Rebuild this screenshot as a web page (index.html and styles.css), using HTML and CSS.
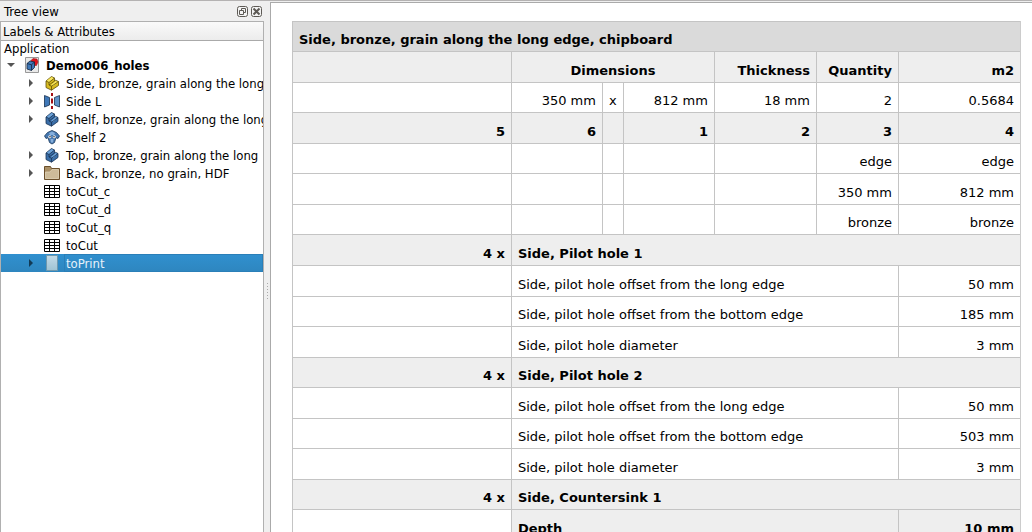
FILE: index.html
```html
<!DOCTYPE html>
<html lang="en">
<head>
<meta charset="utf-8">
<title>Demo006_holes</title>
<link rel="stylesheet" href="styles.css">
</head>
<body>
<svg class="defs" aria-hidden="true">
  <defs>
    <symbol id="sheet" viewBox="0 0 16 16">
      <path fill="#fff" d="M0 2h16v13H0z"/>
      <path fill="none" stroke="#000" d="M.5 2.500h15v12H.5zM0 5.500h16M0 8.500h16M0 11.500h16M5.500 2v13M10.500 2v13"/>
    </symbol>
    <symbol id="solid" viewBox="0 0 16 16">
      <path fill="#3a6ea8" stroke="#1b3454" stroke-width=".8" stroke-linejoin="round" d="M2 6 7.500 1.500 10.500 3v3l1-.7 2.500 1.200v4L7.500 15.200 2 12.500z"/>
      <path fill="#6ea3d8" d="M2.500 6 7.500 2l2.500 1.200L5 7.300zM7 10l4.500-4 2 1-4.300 4z"/>
      <path fill="none" stroke="#1b3454" stroke-width=".8" d="M2 6l3 1.500V10l2.500 1.300v3.900M7.500 11.300 14 6.500M5 7.500 10.500 3M5 10l5.500-4"/>
    </symbol>
    <symbol id="gold" viewBox="0 0 16 16">
      <path fill="#d8bb20" stroke="#5e4f0a" stroke-width=".8" stroke-linejoin="round" d="M2 6 7.500 1.500 10.500 3v3l1-.7 3 1.200v4L7.500 15.200 2 12.500z"/>
      <path fill="#f7e660" d="M2.500 6 7.500 2l2.500 1.200L5 7.300zM7 10l4.500-4 2.300 1-4.600 4z"/>
      <path fill="none" stroke="#5e4f0a" stroke-width=".8" d="M2 6l3 1.500V10l2.500 1.300v3.900M7.500 11.300 14.500 6.500M5 7.500 10.500 3M5 10l5.500-4"/>
    </symbol>
  </defs>
</svg>
<div class="app">
  <aside class="dock">
    <header class="dock-title">
      <h1 class="dock-name">Tree view</h1>
      <button class="dock-btn" type="button" aria-label="Float panel"><svg viewBox="0 0 11 11"><rect x=".5" y=".5" width="10" height="10" rx="2" fill="#f4f4f4" stroke="#5d5a55"/><path fill="none" stroke="#5d5a55" d="M4.500 4.500v-2h4v4h-2M2.500 4.500h4v4h-4z"/></svg></button>
      <button class="dock-btn" type="button" aria-label="Close panel"><svg viewBox="0 0 11 11"><rect x=".5" y=".5" width="10" height="10" rx="2" fill="#f4f4f4" stroke="#5d5a55"/><path stroke="#5d5a55" stroke-width="2" d="m2.500 2.500 6 6m0-6-6 6"/></svg></button>
    </header>
    <div class="tree">
      <div class="tree-head">Labels &amp; Attributes</div>
      <ul class="items">
        <li class="row root">Application</li>
        <li class="row doc">
          <button class="toggle open" type="button" aria-label="Collapse"></button>
          <svg class="icon" viewBox="0 0 16 16"><path fill="#e9e9e9" stroke="#999" d="M1.500.5h13v15h-13z"/><path fill="#e0141c" stroke="#8c0a10" stroke-width=".5" d="M7 3.500 9 1.500l4 .5 1 3-1.500 3.500h-3z"/><path fill="#3f78b8" stroke="#12243f" stroke-width=".8" stroke-linejoin="round" d="m3 6.500 3-2.500 4.500 1v5.500L7.500 13.500 3 12z"/><path fill="none" stroke="#12243f" stroke-width=".8" d="m3 6.500 4.500 1.300 3-2.800M7.500 7.800v5.700"/></svg>
          <span class="label">Demo006_holes</span>
        </li>
        <li class="row"><button class="toggle" type="button" aria-label="Expand"></button><svg class="icon"><use href="#gold"/></svg><span class="label">Side, bronze, grain along the long</span></li>
        <li class="row"><button class="toggle" type="button" aria-label="Expand"></button><svg class="icon" viewBox="0 0 16 16"><path fill="#3f78b8" stroke="#16304f" stroke-width=".8" d="M.5 2.500 5.500 4.500v7.500l-5 2z"/><path fill="#5f92c8" stroke="#16304f" stroke-width=".8" d="M15.500 2.500 10.500 4.500v7.500l5 2z"/><path stroke="#a40f14" stroke-width="2" d="M8 0v3M8 5.500v5M8 13v3"/></svg><span class="label">Side L</span></li>
        <li class="row"><button class="toggle" type="button" aria-label="Expand"></button><svg class="icon"><use href="#solid"/></svg><span class="label">Shelf, bronze, grain along the long</span></li>
        <li class="row"><span class="toggle none"></span><svg class="icon" viewBox="0 0 16 16"><path fill="#4678b0" stroke="#1c3a5e" stroke-width=".8" d="M.5 7 3.500 3.500 8 1.500l4.500 2L15.500 7 14 9.500l-2-.8-1.500 4.800L8 15l-2.500-1.500L4 8.700l-2 .8z"/><path fill="#86afdb" d="M5 4 8 2.500 11 4l-1 2H6zM6.500 10h3l-.5 3.500H7z"/><circle cx="5.800" cy="7.800" r="1.500" fill="#fff"/><circle cx="10.200" cy="7.800" r="1.500" fill="#fff"/><circle cx="6" cy="7.800" r=".7"/><circle cx="10" cy="7.800" r=".7"/></svg><span class="label">Shelf 2</span></li>
        <li class="row"><button class="toggle" type="button" aria-label="Expand"></button><svg class="icon"><use href="#solid"/></svg><span class="label">Top, bronze, grain along the long</span></li>
        <li class="row"><button class="toggle" type="button" aria-label="Expand"></button><svg class="icon" viewBox="0 0 16 16"><path fill="#a98f66" stroke="#6b4f2a" stroke-linejoin="round" d="M.5 14.500v-13h6l1 2h8v11z"/><path fill="#cdbb99" stroke="#e4d8bf" stroke-width=".7" d="M1.500 13.500V7h4.500l2-2.500h6.500v9z"/></svg><span class="label">Back, bronze, no grain, HDF</span></li>
        <li class="row"><span class="toggle none"></span><svg class="icon"><use href="#sheet"/></svg><span class="label">toCut_c</span></li>
        <li class="row"><span class="toggle none"></span><svg class="icon"><use href="#sheet"/></svg><span class="label">toCut_d</span></li>
        <li class="row"><span class="toggle none"></span><svg class="icon"><use href="#sheet"/></svg><span class="label">toCut_q</span></li>
        <li class="row"><span class="toggle none"></span><svg class="icon"><use href="#sheet"/></svg><span class="label">toCut</span></li>
        <li class="row selected"><button class="toggle" type="button" aria-label="Expand"></button><svg class="icon" viewBox="0 0 16 16"><defs><linearGradient id="pg" x2="0" y2="1"><stop stop-color="#c3dbe8"/><stop offset="1" stop-color="#9fc3d4"/></linearGradient></defs><path fill="url(#pg)" stroke="#6f98ad" d="M2.500.5h11v15h-11z"/></svg><span class="label">toPrint</span></li>
      </ul>
    </div>
  </aside>
  <div class="splitter" role="separator"><span class="grip"></span></div>
  <main class="page">
    <table class="report">
      <colgroup><col><col class="c-dim"><col class="c-x"><col class="c-dim"><col class="c-thick"><col class="c-qty"><col class="c-area"></colgroup>
      <tbody class="panel">
        <tr class="title"><th colspan="7">Side, bronze, grain along the long edge, chipboard</th></tr>
        <tr class="head"><th></th><th class="mid" colspan="3">Dimensions</th><th>Thickness</th><th>Quantity</th><th>m2</th></tr>
        <tr><td></td><td>350 mm</td><td class="mid">x</td><td>812 mm</td><td>18 mm</td><td>2</td><td>0.5684</td></tr>
        <tr class="head"><th>5</th><th>6</th><th></th><th>1</th><th>2</th><th>3</th><th>4</th></tr>
        <tr><td></td><td></td><td></td><td></td><td></td><td>edge</td><td>edge</td></tr>
        <tr><td></td><td></td><td></td><td></td><td></td><td>350 mm</td><td>812 mm</td></tr>
        <tr><td></td><td></td><td></td><td></td><td></td><td>bronze</td><td>bronze</td></tr>
        <tr class="head"><th>4 x</th><th class="name" colspan="6">Side, Pilot hole 1</th></tr>
      </tbody>
      <tbody class="holes">
        <tr><td></td><td class="name" colspan="5">Side, pilot hole offset from the long edge</td><td>50 mm</td></tr>
        <tr><td></td><td class="name" colspan="5">Side, pilot hole offset from the bottom edge</td><td>185 mm</td></tr>
        <tr><td></td><td class="name" colspan="5">Side, pilot hole diameter</td><td>3 mm</td></tr>
        <tr class="head"><th>4 x</th><th class="name" colspan="6">Side, Pilot hole 2</th></tr>
        <tr><td></td><td class="name" colspan="5">Side, pilot hole offset from the long edge</td><td>50 mm</td></tr>
        <tr><td></td><td class="name" colspan="5">Side, pilot hole offset from the bottom edge</td><td>503 mm</td></tr>
        <tr><td></td><td class="name" colspan="5">Side, pilot hole diameter</td><td>3 mm</td></tr>
        <tr class="head"><th>4 x</th><th class="name" colspan="6">Side, Countersink 1</th></tr>
        <tr><td></td><th class="name shade" colspan="5">Depth</th><th class="shade">10 mm</th></tr>
      </tbody>
    </table>
  </main>
</div>
</body>
</html>
```
FILE: styles.css
```css
* { box-sizing: border-box; }

body {
  margin: 0;
  background: #efefef;
  color: #000;
  font-family: "DejaVu Sans Condensed", "DejaVu Sans", sans-serif;
  font-size: 13px;
}

.defs { position: absolute; width: 0; height: 0; }

.app {
  display: flex;
  height: 100vh;
  overflow: hidden;
  border-top: 1px solid #b4b2b2;
}

.dock {
  display: flex;
  flex-direction: column;
  flex: 0 0 264px;
  min-width: 0;
}

.dock-title {
  display: flex;
  align-items: center;
  gap: 3px;
  height: 20px;
  padding: 1px 2px 0 4px;
}

.dock-name {
  flex: 1;
  margin: 0;
  font-size: 13px;
  font-weight: normal;
}

.dock-btn {
  width: 11px;
  height: 11px;
  padding: 0;
  border: 0;
  background: none;
}

.dock-btn svg { display: block; width: 11px; height: 11px; }

.tree {
  flex: 1;
  border: 1px solid #b0b0b0;
  border-bottom: 0;
  background: #fff;
  overflow: hidden;
}

.tree-head {
  height: 19px;
  padding-left: 2px;
  border-bottom: 1px solid #aaa;
  background: linear-gradient(#fafafa, #ececec);
  line-height: 19px;
}

.items { margin: 0; padding: 0; list-style: none; }

.row {
  display: flex;
  align-items: center;
  height: 18px;
  padding-left: 25px;
  line-height: 18px;
  white-space: nowrap;
}

.root { height: 15px; padding-left: 3px; }
.doc { padding-left: 5px; font-weight: bold; }

.icon {
  flex: none;
  width: 16px;
  height: 16px;
  margin: 0 4px 0 8px;
}

.label {
  flex: 1;
  padding: 2px 0 0 2px;
  line-height: 16px;
  overflow: hidden;
}

.toggle {
  display: flex;
  align-items: center;
  justify-content: center;
  flex: none;
  width: 10px;
  height: 16px;
  padding: 0;
  border: 0;
  background: none;
}

.toggle::before {
  content: "";
  border: 4px solid transparent;
  border-left-color: #555;
  border-right: 0;
}

.toggle.open::before {
  border: 4px solid transparent;
  border-top-color: #555;
  border-bottom: 0;
}

.toggle.none::before { content: none; }

.selected {
  background: linear-gradient(#3090cf, #2e86bf);
  color: #e6f2fa;
}

.selected .toggle::before { border-left-color: #123a55; }
.selected .label { box-shadow: inset 0 0 0 1px #2a7fb8; }

.splitter {
  display: flex;
  align-items: center;
  justify-content: center;
  flex: 0 0 6px;
}

.grip {
  width: 1px;
  height: 18px;
  margin-top: 50px;
  background: repeating-linear-gradient(#aaa 0 1px, transparent 1px 3px);
}

.page {
  flex: 1;
  min-width: 0;
  margin-top: 1px;
  padding: 18px 11px 0 21px;
  border: 1px solid #aaa;
  border-width: 1px 0 0 1px;
  background: #fff;
}

.report {
  width: 100%;
  table-layout: fixed;
  border-collapse: separate;
  border-spacing: 0;
  border-right: 1px solid #ccc;
  font-family: "DejaVu Sans", sans-serif;
  font-size: 13px;
}

.c-dim { width: 91px; }
.c-x { width: 21px; }
.c-thick { width: 102px; }
.c-qty { width: 82px; }
.c-area { width: 122px; }

.report td,
.report th {
  padding: 7px 6px 0;
  border: 1px solid #c4c4c4;
  border-width: 1px 0 0 1px;
  line-height: 20px;
  text-align: right;
  white-space: nowrap;
}

.report .mid { text-align: center; }
.report .name,
.report .title th { text-align: left; }

.panel tr:nth-child(odd),
.holes tr:nth-child(even) { height: 30px; }
.panel tr:nth-child(even),
.holes tr:nth-child(odd) { height: 31px; }

.head,
.shade { background: #eee; }
.title { background: #dadada; }
```
